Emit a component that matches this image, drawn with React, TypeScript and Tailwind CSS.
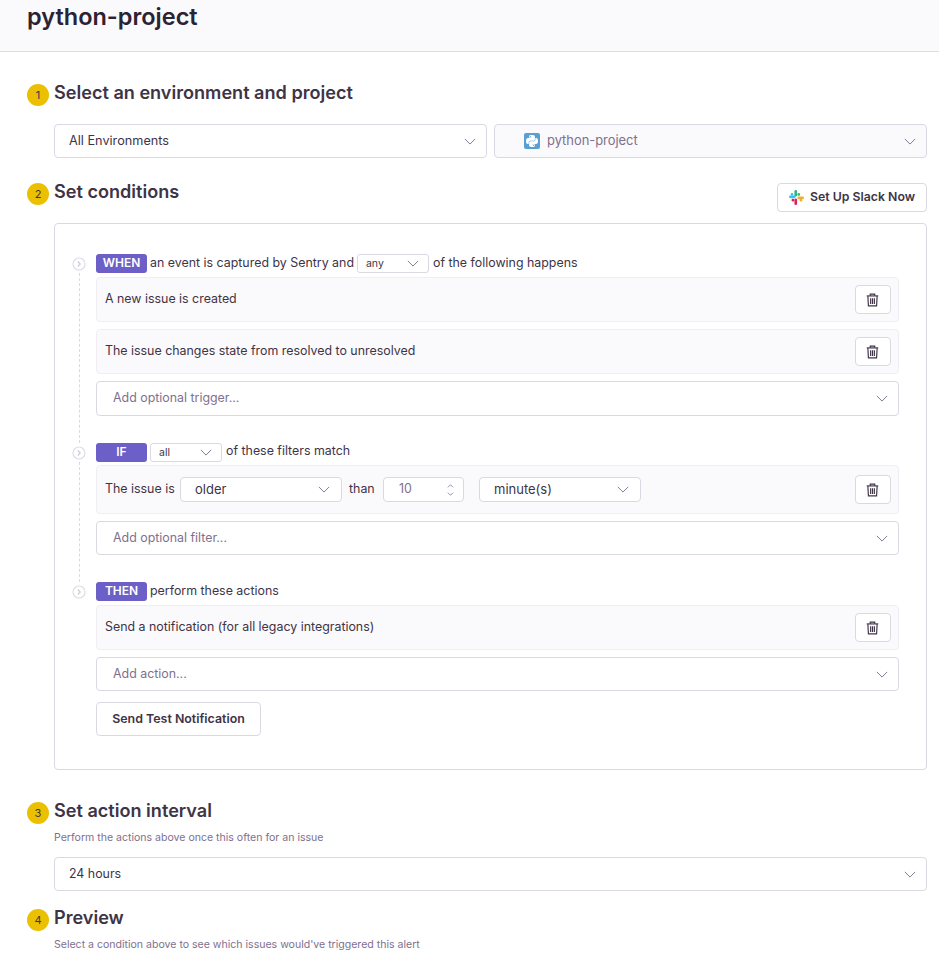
import React from "react";
import { SiPython } from "react-icons/si";

const Chevron = ({ className = "" }: { className?: string }) => (
  <svg viewBox="0 0 14 8" className={`w-[12px] h-[7px] shrink-0 ${className}`} fill="none" stroke="#80708f" strokeWidth="1.1">
    <path d="M1 1l6 6 6-6" />
  </svg>
);

const Trash = () => (
  <svg viewBox="0 0 14 14" className="w-[13px] h-[14px] -ml-[1px]" fill="none" stroke="#3e3446" strokeWidth="1.25">
    <path d="M.8 2.6h12.4" />
    <path d="M4.6 2.4V.7h4.800v1.700" />
    <path d="M2 2.800l.6 10.500h8.800l.6-10.500" />
    <path d="M5 5v6.400M7 5v6.400M9 5v6.400" />
  </svg>
);

const StepDot = () => (
  <svg viewBox="0 0 14 14" className="w-[14px] h-[14px] shrink-0 bg-white" fill="none" stroke="#e0dce5" strokeWidth="1.2">
    <circle cx="7" cy="7" r="6" />
    <path d="M5.800 4.500L8.200 7l-2.400 2.500" stroke="#d0cad8" />
  </svg>
);

const PythonLogo = () => (
  <span className="w-[16px] h-[16px] shrink-0 rounded-[2px] bg-[#5a9fd4] flex items-center justify-center">
    <SiPython className="w-[12px] h-[12px] text-white" />
  </span>
);

const SlackLogo = () => (
  <svg viewBox="0 0 16 16" className="w-[15px] h-[15px] shrink-0">
    <rect x="0" y="5.900" width="7" height="2.800" rx="1.400" fill="#36c5f0" />
    <rect x="1.800" y="3.300" width="2.800" height="2.800" rx="1.300" fill="#36c5f0" />
    <rect x="5.800" y="0" width="2.800" height="7" rx="1.400" fill="#2eb67d" />
    <rect x="9" y="3.300" width="2.800" height="2.800" rx="1.300" fill="#2eb67d" />
    <rect x="9" y="7" width="7" height="2.800" rx="1.400" fill="#ecb22e" />
    <rect x="11.400" y="9.400" width="2.800" height="2.800" rx="1.300" fill="#ecb22e" />
    <rect x="5.800" y="9" width="2.800" height="7" rx="1.400" fill="#e01e5a" />
    <rect x="2.800" y="9.400" width="2.800" height="2.800" rx="1.300" fill="#e01e5a" />
  </svg>
);

const Num = ({ n }: { n: number }) => (
  <div className="w-[22px] h-[22px] rounded-full bg-[#ebc000] flex items-center justify-center text-[11px] text-[#3e3446] shrink-0">
    {n}
  </div>
);

const Heading = ({ n, children }: { n: number; children: React.ReactNode }) => (
  <div className="flex items-center gap-[5px] h-[22px]">
    <Num n={n} />
    <h2 className="text-[18.100px] font-semibold text-[#3e3446] leading-[18px] -mt-[7px]">{children}</h2>
  </div>
);

const Select = ({ label, placeholder, h = "h-[34px]", size = "text-[12.400px]" }: { label: string; placeholder?: boolean; h?: string; size?: string }) => (
  <div className={`${h} flex items-center justify-between bg-white border border-[#dcd8e3] rounded-[4px] ${placeholder ? "pl-[16px]" : "pl-[14px]"} pr-[10px]`}>
    <span className={`${size} ${placeholder ? "text-[#80708f]" : "text-[#3e3446]"}`}>{label}</span>
    <Chevron />
  </div>
);

const Mini = ({ label, w }: { label: string; w: string }) => (
  <div className={`h-[19px] flex items-center justify-between bg-white border border-[#dcd8e3] rounded-[3px] pl-[8px] pr-[9px] ${w}`}>
    <span className="text-[10.500px] text-[#3e3446]">{label}</span>
    <Chevron />
  </div>
);

const Badge = ({ children }: { children: React.ReactNode }) => (
  <span className="w-[51px] h-[19px] rounded-[3px] bg-[#6c5fc7] text-white text-[12px] font-semibold flex items-center justify-center shrink-0 pb-[1px]">
    {children}
  </span>
);

const Row = ({ children, h }: { children: React.ReactNode; h: string }) => (
  <div className={`${h} flex items-center justify-between bg-[#faf9fb] border border-[#f0eef3] rounded-[4px] pl-[8px] pr-[7px] text-[12.400px] text-[#3e3446]`}>
    {children}
    <div className="w-[36px] h-[29px] bg-white border border-[#dcd8e3] rounded-[4px] flex items-center justify-center shrink-0">
      <Trash />
    </div>
  </div>
);

const Block = ({ last, children, className = "" }: { last?: boolean; children: React.ReactNode; className?: string }) => (
  <div className={`flex ${className}`}>
    <div className="w-[41px] pl-[17px] pt-[3px] flex flex-col shrink-0">
      <StepDot />
      {!last && <div className="ml-[7px] mt-[2px] flex-1 border-l border-dashed border-[#dcd8e3]" />}
    </div>
    <div className="flex-1 min-w-0">{children}</div>
  </div>
);

const Head = ({ children }: { children: React.ReactNode }) => (
  <div className="flex items-center gap-[3px] h-[19px] text-[12.400px] text-[#3e3446]">{children}</div>
);

const Txt = ({ children, className = "" }: { children: React.ReactNode; className?: string }) => (
  <span className={`whitespace-nowrap ${className || "-mt-[2px]"}`}>{children}</span>
);

export default function App() {
  return (
    <div className="h-[953px] overflow-hidden bg-white font-['Inter','Liberation_Sans',sans-serif] text-[#3e3446]">
      <header className="h-[52px] bg-[#faf9fb] border-b border-[#e0dce5] pl-[27px] pt-[3px]">
        <h1 className="text-[23.500px] leading-[28px] font-semibold text-[#2b2233]">python-project</h1>
      </header>
      <main className="pl-[27px] pr-[12px] pt-[32px]">
        <Heading n={1}>Select an environment and project</Heading>
        <div className="ml-[27px] mt-[18px] grid grid-cols-2 gap-[7px]">
          <Select label="All Environments" size="text-[12.700px]" />
          <div className="h-[34px] flex items-center justify-between bg-[#faf9fb] border border-[#dcd8e3] rounded-[4px] pl-[29px] pr-[10px]">
            <span className="flex items-center gap-[7px] text-[12.900px] text-[#80708f]">
              <PythonLogo />
              python-project
            </span>
            <Chevron />
          </div>
        </div>

        <div className="mt-[25px] flex items-start justify-between">
          <Heading n={2}>Set conditions</Heading>
          <div className="w-[150px] h-[29px] bg-white border border-[#dcd8e3] rounded-[4px] flex items-center justify-center gap-[6px] text-[12.300px] font-semibold text-[#3e3446]">
            <SlackLogo />
            Set Up Slack Now
          </div>
        </div>

        <section className="ml-[27px] mt-[11px] h-[547px] border border-[#dcd8e3] rounded-[4px] pt-[30px] pr-[27px]">
          <Block className="h-[189px]">
            <Head>
              <Badge>WHEN</Badge>
              <Txt className="-mt-[1px]">an event is captured by Sentry and</Txt>
              <Mini label="any" w="w-[72px]" />
              <Txt className="ml-[1px] -mt-[1px]">of the following happens</Txt>
            </Head>
            <div className="mt-[4px] flex flex-col gap-[7px]">
              <Row h="h-[45px]"><Txt className="-mt-[1px]">A new issue is created</Txt></Row>
              <Row h="h-[45px]"><Txt className="-mt-[1px]">The issue changes state from resolved to unresolved</Txt></Row>
              <Select label="Add optional trigger..." placeholder h="h-[35px]" />
            </div>
          </Block>
          <Block className="h-[139px]">
            <Head>
              <Badge>IF</Badge>
              <Mini label="all" w="w-[72px]" />
              <Txt className="ml-[1px] -mt-[2px]">of these filters match</Txt>
            </Head>
            <div className="mt-[3px] flex flex-col gap-[7px]">
              <Row h="h-[49px]">
                <div className="flex items-center gap-[7px]">
                  <Txt className="w-[68px] -mt-[1px]">The issue is</Txt>
                  <div className="w-[162px] h-[25px] flex items-center justify-between bg-white border border-[#dcd8e3] rounded-[4px] pl-[14px] pr-[11px]">
                    <span className="text-[13px]">older</span>
                    <Chevron />
                  </div>
                  <Txt className="w-[27px] -mt-[1px]">than</Txt>
                  <div className="w-[81px] h-[25px] flex items-center justify-between bg-white border border-[#dcd8e3] rounded-[4px] pl-[15px] pr-[9px]">
                    <span className="text-[#80708f]">10</span>
                    <svg viewBox="0 0 8 14" className="w-[7px] h-[14px]" fill="none" stroke="#80708f" strokeWidth="0.9">
                      <path d="M1 4l3-3 3 3M1 10l3 3 3-3" />
                    </svg>
                  </div>
                  <div className="ml-[8px] w-[162px] h-[25px] flex items-center justify-between bg-white border border-[#dcd8e3] rounded-[4px] pl-[14px] pr-[11px]">
                    <span className="text-[13px]">minute(s)</span>
                    <Chevron />
                  </div>
                </div>
              </Row>
              <Select label="Add optional filter..." placeholder />
            </div>
          </Block>
          <Block last>
            <Head>
              <Badge>THEN</Badge>
              <Txt className="-mt-[1px]">perform these actions</Txt>
            </Head>
            <div className="mt-[4px] flex flex-col gap-[7px]">
              <Row h="h-[45px]"><Txt className="-mt-[1px]">Send a notification (for all legacy integrations)</Txt></Row>
              <Select label="Add action..." placeholder />
            </div>
            <div className="mt-[11px] w-[165px] h-[34px] bg-white border border-[#dcd8e3] rounded-[4px] flex items-center justify-center text-[12.400px] font-semibold">
              Send Test Notification
            </div>
          </Block>
        </section>

        <div className="mt-[32px]">
          <Heading n={3}>Set action interval</Heading>
          <p className="ml-[27px] mt-[7px] text-[10.550px] leading-[14px] text-[#80708f]">Perform the actions above once this often for an issue</p>
          <div className="ml-[27px] mt-[12px]">
            <Select label="24 hours" />
          </div>
        </div>
        <div className="mt-[18px]">
          <Heading n={4}>Preview</Heading>
          <p className="ml-[27px] mt-[7px] text-[10.550px] leading-[14px] text-[#80708f]">Select a condition above to see which issues would've triggered this alert</p>
        </div>
      </main>
    </div>
  );
}
